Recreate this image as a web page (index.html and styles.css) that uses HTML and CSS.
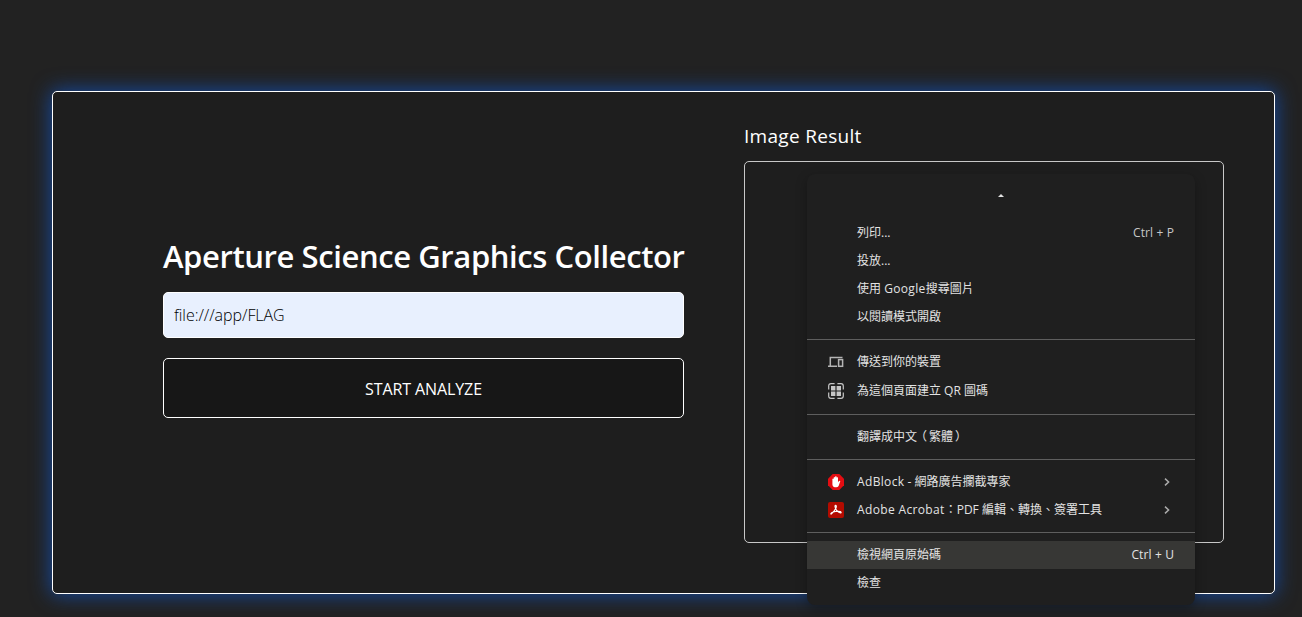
FILE: index.html
```html
<!DOCTYPE html>
<html lang="zh-Hant">
<head>
<meta charset="utf-8">
<title>Aperture Science Graphics Collector</title>
<link rel="stylesheet" href="styles.css">
</head>
<body>
<main class="card">
  <section class="collector">
    <h1 class="title">Aperture Science Graphics Collector</h1>
    <input class="url" type="text" value="file:///app/FLAG">
    <button class="start" type="button">START ANALYZE</button>
  </section>
  <section class="result">
    <h2 class="subtitle">Image Result</h2>
    <div class="frame"></div>
  </section>
</main>
<div class="menu">
  <div class="scroll-up"><svg width="6" height="3" viewBox="0 0 6 3"><path d="M0 3L3 0L6 3Z" fill="#e3e3e3"/></svg></div>
  <div class="item"><span class="label">列印...</span><span class="key">Ctrl + P</span></div>
  <div class="item"><span class="label">投放...</span></div>
  <div class="item"><span class="label">使用 <span class="wide">Google</span>搜尋圖片</span></div>
  <div class="item"><span class="label">以閱讀模式開啟</span></div>
  <div class="sep"></div>
  <div class="item"><svg class="icon" viewBox="0 0 16 16" fill="none" stroke="#b4b4b4" stroke-width="1.5"><path d="M14.5 3.5H2.3V11.5M0 12.3H9"/><rect x="10.6" y="5.6" width="4" height="6.7"/></svg><span class="label">傳送到你的裝置</span></div>
  <div class="item tall"><svg class="icon" viewBox="0 0 16 16"><path d="M.7 6.6V3Q.7.7 3 .7H6.6M9.4 .7h3.6Q15.3.7 15.3 3v3.6M15.3 9.4v3.6q0 2.3-2.3 2.3h-3.6M6.6 15.3H3Q.7 15.3.7 13v-3.6" fill="none" stroke="#c6c6c6" stroke-width="1.2"/><path d="M3 3h4.4v4.4H3zM8.6 3H13v4.4H8.6zM3 8.6h4.4V13H3zM8.6 8.6H13V13H8.6z" fill="#c6c6c6"/></svg><span class="label">為這個頁面建立 QR 圖碼</span></div>
  <div class="sep"></div>
  <div class="item"><span class="label">翻譯成中文<span class="open">（</span>繁體<span class="close">）</span></span></div>
  <div class="sep"></div>
  <div class="item"><svg class="icon" viewBox="0 0 16 16"><path d="M4.7 0h6.6L16 4.7v6.6L11.3 16H4.7L0 11.3V4.7Z" fill="#e40d12"/><path d="M4.4 8V4.9q.7-.8 1.3 0V3.4q.7-.8 1.4 0v-.8q.8-.8 1.5 0v1q.8-.7 1.4 0v4.6l1-1.2q1.2-.5 1.3.3L10.6 12q-.7 1.3-2.4 1.3-3.6 0-3.8-2.9Z" fill="#fff"/></svg><span class="label"><span class="wide">AdBlock</span> - 網路廣告攔截專家</span><svg class="chevron" viewBox="0 0 6 8"><path d="M1 .6L4.6 4L1 7.4" fill="none" stroke="#aaa" stroke-width="1.5"/></svg></div>
  <div class="item"><svg class="icon" viewBox="0 0 16 16"><rect width="16" height="16" rx="2" fill="#b30b00"/><path d="M7.5 3.4C9.2 3.4 8.5 7 3.5 11.9C2.5 12.8 2.4 10.8 5.2 10C8.2 9 12.8 8.8 13.1 10.2C13.3 11.8 9.6 10.3 8.2 7.7C7.2 5.8 6.5 3.4 7.5 3.4Z" fill="none" stroke="#fff" stroke-width="1.15"/></svg><span class="label"><span class="wide">Adobe Acrobat</span>：PDF 編輯、轉換、簽署工具</span><svg class="chevron" viewBox="0 0 6 8"><path d="M1 .6L4.6 4L1 7.4" fill="none" stroke="#aaa" stroke-width="1.5"/></svg></div>
  <div class="sep"></div>
  <div class="item active"><span class="label">檢視網頁原始碼</span><span class="key">Ctrl + U</span></div>
  <div class="item"><span class="label">檢查</span></div>
</div>
</body>
</html>
```
FILE: styles.css
```css
* { box-sizing: border-box; }
body {
  margin: 0;
  height: 617px;
  padding: 91px 27px 23px 52px;
  overflow: hidden;
  background: #222;
  color: #fff;
  font-family: "Open Sans", "Noto Sans CJK TC", sans-serif;
}
.card {
  display: flex;
  gap: 60px;
  height: 503px;
  padding: 0 50px 0 110px;
  background: #1e1e1e;
  border: 1px solid #fff;
  border-radius: 5px;
  box-shadow: 0 0 20px 1px rgba(20, 75, 165, .95);
}
.collector { width: 521px; padding-top: 142px; }
.title {
  margin: 0;
  height: 58px;
  font-size: 31px;
  line-height: 44px;
  font-weight: 600;
  letter-spacing: -.41px;
  white-space: nowrap;
}
.url {
  display: block;
  width: 100%;
  height: 46px;
  padding: 0 10px;
  background: #e8f0fe;
  border: 1px solid #fff;
  border-radius: 5px;
  color: #000;
  font: 300 16px "Open Sans", sans-serif;
  letter-spacing: -.05px;
}
.start {
  display: block;
  width: 100%;
  height: 60px;
  margin-top: 20px;
  padding: 1px 0 0;
  background: #171717;
  border: 1px solid #fff;
  border-radius: 5px;
  color: #fff;
  font: 500 16px "Open Sans", sans-serif;
  letter-spacing: -.1px;
}
.result { width: 480px; padding-top: 29px; }
.subtitle {
  margin: 0;
  height: 40px;
  font-size: 19px;
  line-height: 30px;
  font-weight: 400;
  letter-spacing: .3px;
  white-space: nowrap;
}
.frame {
  height: 382px;
  border: 1px solid #c8c8c8;
  border-radius: 5px;
}
.menu {
  position: absolute;
  left: 807px;
  top: 174px;
  width: 388px;
  height: 431px;
  background: #1f1f1f;
  border-radius: 8px;
  box-shadow: 0 4px 12px rgba(0, 0, 0, .3);
  font-size: 12px;
  color: #e3e3e3;
}
.scroll-up {
  display: flex;
  justify-content: center;
  height: 45px;
  padding-top: 20px;
}
.item {
  display: flex;
  align-items: center;
  height: 28px;
  padding: 0 21px 0 50px;
  line-height: 28px;
  white-space: nowrap;
}
.tall { height: 30px; }
.active { background: #373735; }
.icon { width: 16px; height: 16px; margin: 0 13px 0 -29px; flex: none; }
.wide { letter-spacing: .35px; }
.open { margin: 0 2px 0 -2px; }
.close { margin-left: 2px; }
.key { margin-left: auto; color: #c7c7c7; letter-spacing: .12px; }
.active .key { color: #e3e3e3; }
.chevron { width: 6px; height: 8px; margin: 0 4px 0 auto; }
.sep { height: 1px; margin: 8px 0; background: #5e5e5e; }
```
